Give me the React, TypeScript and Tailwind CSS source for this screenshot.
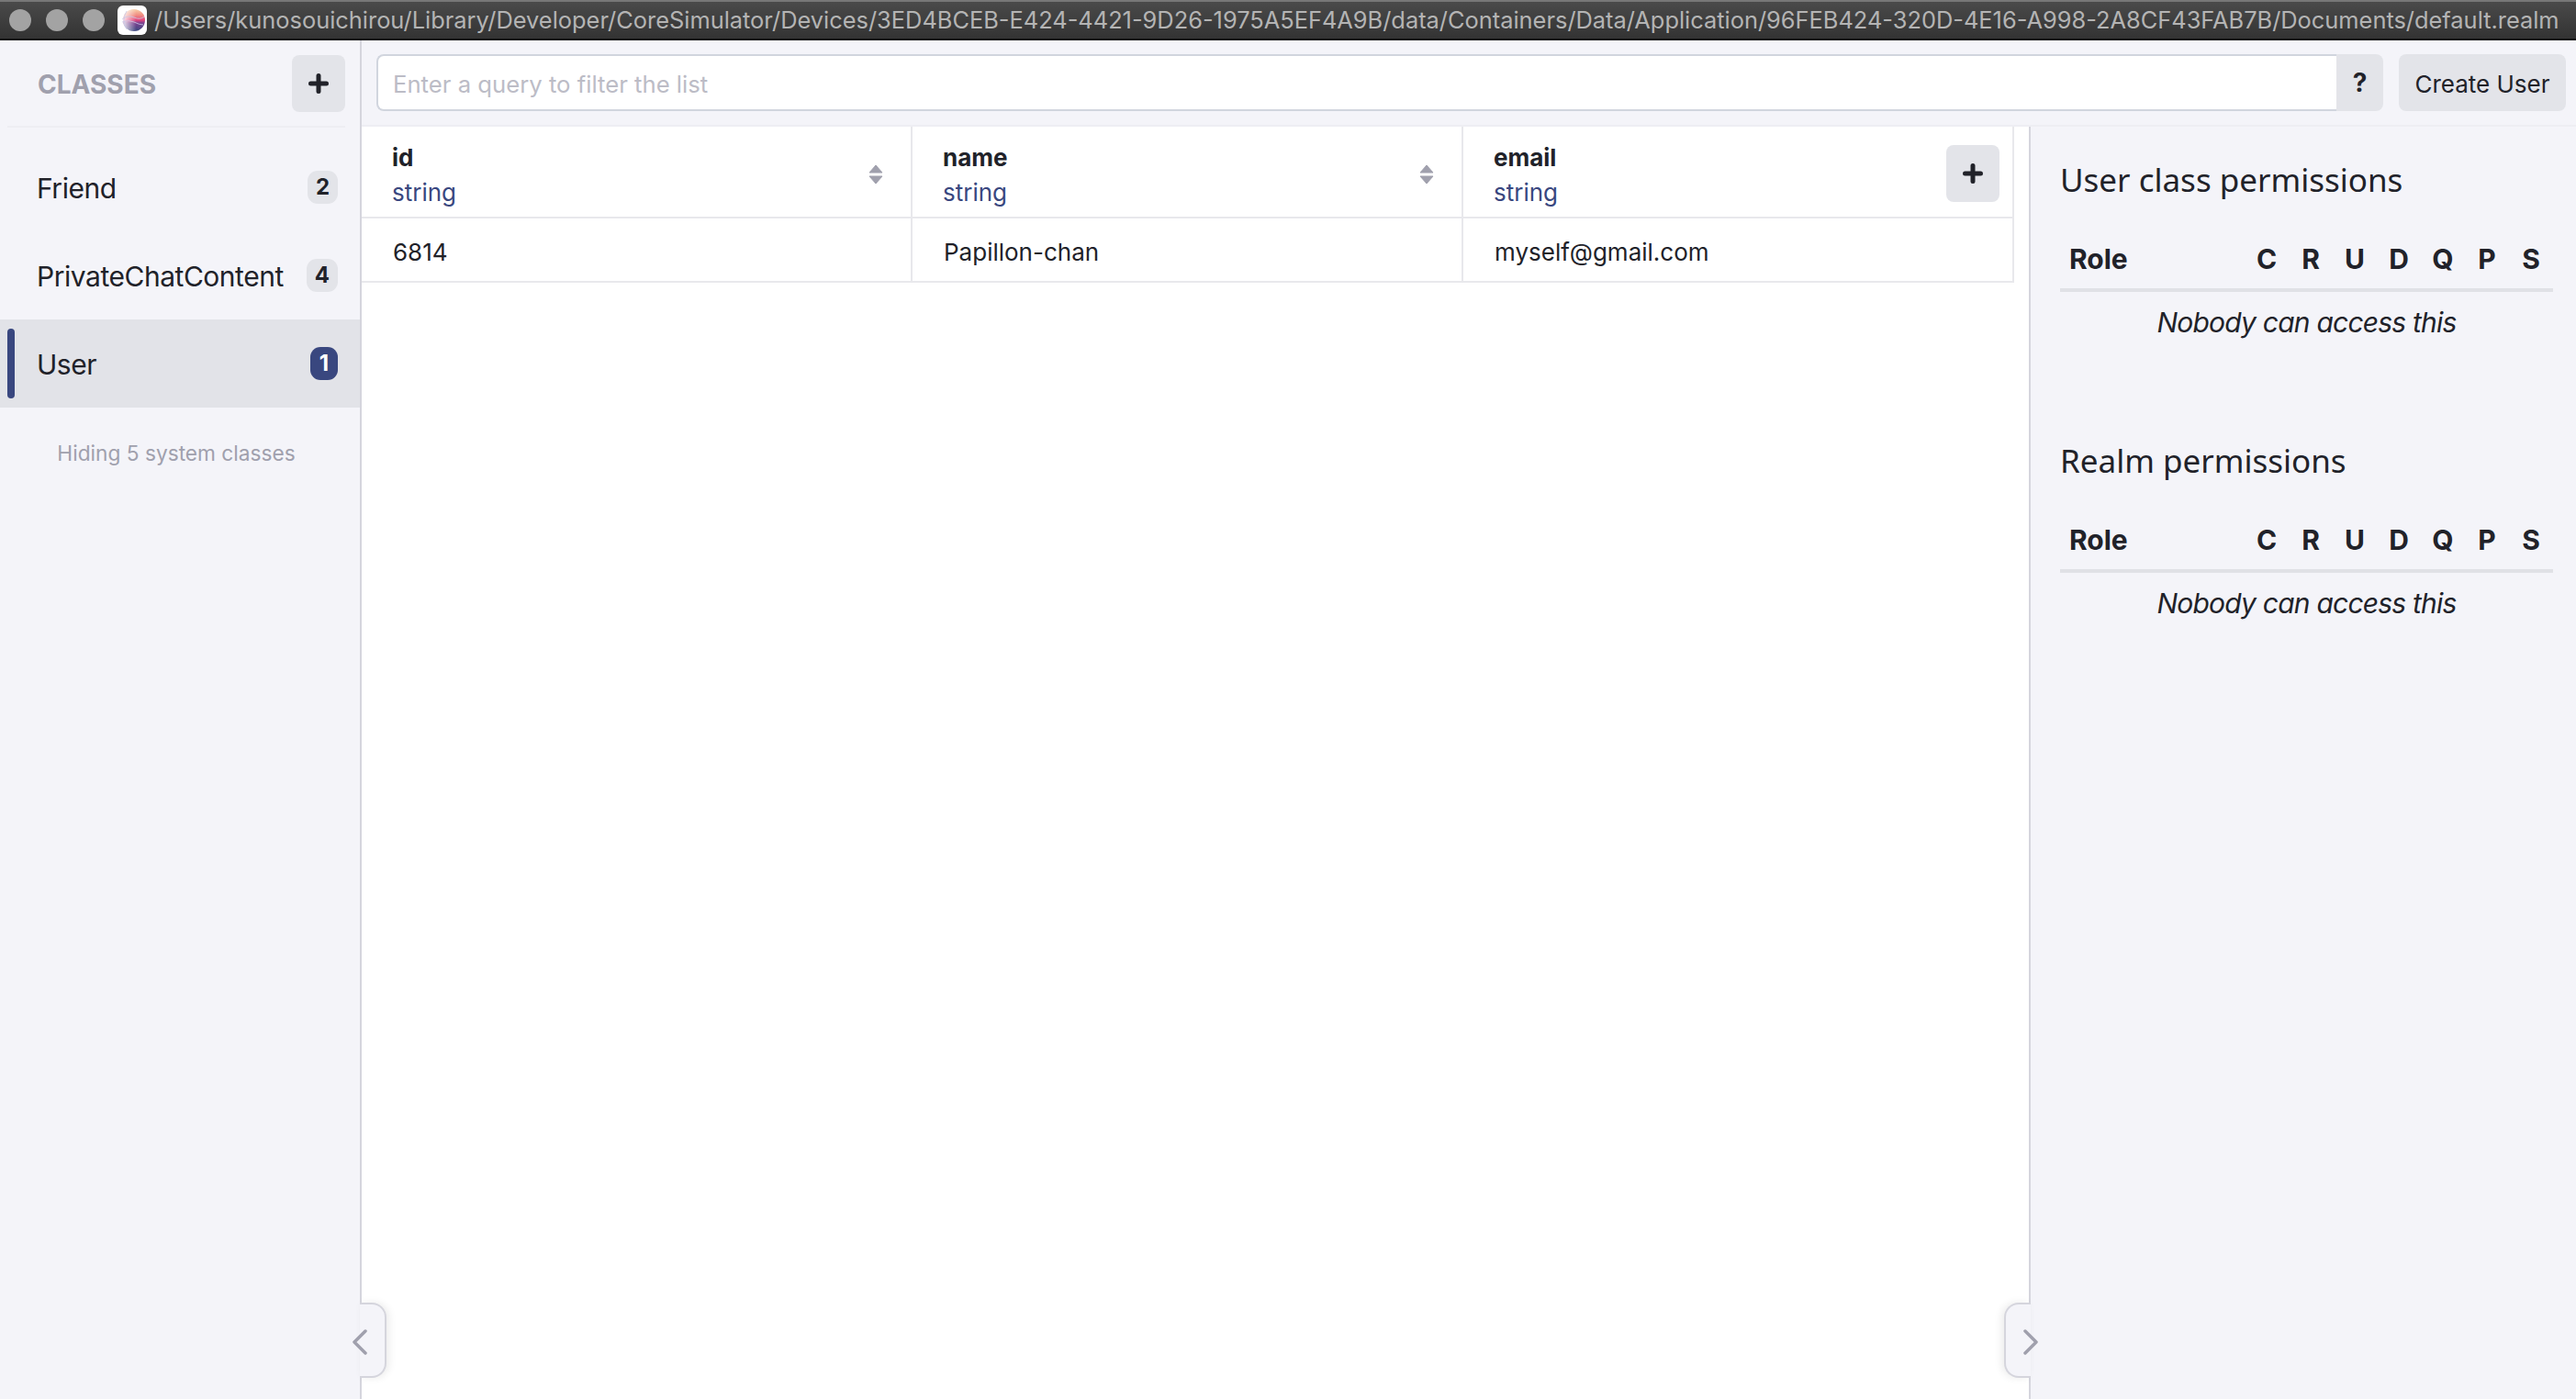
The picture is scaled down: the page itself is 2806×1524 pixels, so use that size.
const ink = "text-[#212229]";

function Plus({ size = 22 }: { size?: number }) {
  return (
    <svg width={size} height={size} viewBox="0 0 22 22">
      <path d="M11 2.5V19.5M2.5 11H19.5" stroke="#212229" strokeWidth="5" strokeLinecap="round" />
    </svg>
  );
}

function Logo() {
  return (
    <div className="w-[32px] h-[32px] bg-white rounded-[6px] flex items-center justify-center shrink-0">
      <svg width="28" height="28" viewBox="0 0 28 28">
        <defs>
          <linearGradient id="ball" x1="0" y1="0" x2="0" y2="1">
            <stop offset="0" stopColor="#f7cfa8" />
            <stop offset="0.28" stopColor="#f08a80" />
            <stop offset="0.5" stopColor="#e2447e" />
            <stop offset="0.62" stopColor="#7c4290" />
            <stop offset="1" stopColor="#39477f" />
          </linearGradient>
          <linearGradient id="fade" x1="0" y1="0" x2="1" y2="0">
            <stop offset="0" stopColor="#ffffff" stopOpacity="0.85" />
            <stop offset="0.6" stopColor="#ffffff" stopOpacity="0" />
          </linearGradient>
        </defs>
        <circle cx="16" cy="14" r="12" fill="url(#ball)" />
        <circle cx="16" cy="14" r="12" fill="url(#fade)" />
        <path d="M3 13Q9 8 16 11T27 10M3 16Q10 13 16 16T26 19M8 24Q2 14 8 4" fill="none" stroke="#c9c9e6" strokeWidth="0.8" />
      </svg>
    </div>
  );
}

function TitleBar() {
  return (
    <div className="h-[44px] shrink-0 flex items-center bg-gradient-to-b from-[#4a4a4a] to-[#333333] border-t-2 border-t-[#777777] border-b-2 border-b-[#0c0c0c] pl-[10px] overflow-hidden">
      <span className="w-[24px] h-[24px] rounded-full bg-[#a3a3a3] shrink-0" />
      <span className="w-[24px] h-[24px] rounded-full bg-[#a3a3a3] ml-[16px] shrink-0" />
      <span className="w-[24px] h-[24px] rounded-full bg-[#a3a3a3] ml-[16px] shrink-0" />
      <div className="ml-[14px]"><Logo /></div>
      <span className="ml-[8px] text-[25.4px] text-[#b4b4b4] whitespace-nowrap font-['Inter',sans-serif]">
        /Users/kunosouichirou/Library/Developer/CoreSimulator/Devices/3ED4BCEB-E424-4421-9D26-1975A5EF4A9B/data/Containers/Data/Application/96FEB424-320D-4E16-A998-2A8CF43FAB7B/Documents/default.realm
      </span>
    </div>
  );
}

function ClassRow({ name, count, active }: { name: string; count: number; active?: boolean }) {
  return (
    <div className={`h-[96px] flex items-center pl-[40px] pr-[24px] relative ${active ? "bg-[#e2e3e8]" : ""}`}>
      {active && <span className="absolute left-[8px] top-[10px] bottom-[10px] w-[8px] rounded-full bg-[#39477f]" />}
      <span className={`text-[30px] tracking-[-0.47px] pt-[2px] ${ink} flex-1`}>{name}</span>
      <span
        className={`h-[36px] min-w-[30px] px-[9px] rounded-[11px] flex items-center justify-center text-[24px] font-bold ${
          active ? "bg-[#39477f] text-white" : `bg-[#e3e4e9] ${ink}`
        }`}
      >
        {count}
      </span>
    </div>
  );
}

function Sidebar() {
  return (
    <aside className="w-[394px] shrink-0 bg-[#f4f4f9] border-r-2 border-r-[#d5d5dd] flex flex-col">
      <div className="h-[95px] ml-[8px] mr-[16px] pl-[33px] flex items-center justify-between border-b-2 border-b-[#eeeef3]">
        <span className="text-[28px] pt-[2px] font-bold text-[#a0a0ad]">CLASSES</span>
        <button className="w-[58px] h-[62px] rounded-[8px] bg-[#e3e4e9] flex items-center justify-center">
          <Plus />
        </button>
      </div>
      <div className="pt-[17px]">
        <ClassRow name="Friend" count={2} />
        <ClassRow name="PrivateChatContent" count={4} />
        <ClassRow name="User" count={1} active />
      </div>
      <div className="pt-[33px] pr-[8px] text-center text-[22.7px] text-[#a0a0ad]">Hiding 5 system classes</div>
    </aside>
  );
}

function Sort() {
  return (
    <svg width="16" height="22" viewBox="0 0 16 22" className="shrink-0">
      <path d="M8 1L15 9H1Z M1 13H15L8 21Z" fill="#a0a0ad" stroke="#a0a0ad" strokeWidth="1" strokeLinejoin="round" />
    </svg>
  );
}

function Column({ name, children }: { name: string; children: React.ReactNode }) {
  return (
    <div className="border-r-2 border-r-[#e8e8ec] last:border-r-0 h-full pl-[33px] pr-[14px] flex items-center justify-between">
      <div className="mt-[7px]">
        <div className={`text-[26px] leading-[38px] font-bold ${ink}`}>{name}</div>
        <div className="text-[26px] leading-[38px] text-[#39477f]">string</div>
      </div>
      {children}
    </div>
  );
}

const colClass = "grid grid-cols-[600px_600px_598px]";

function DataTable() {
  return (
    <div className="flex-1 bg-white relative">
      <div className="w-[1800px] border-r-2 border-r-[#e8e8ec]">
        <div className={`${colClass} h-[100px] border-b-2 border-b-[#e8e8ec]`}>
          <Column name="id"><div className="pr-[16px] mt-[5px]"><Sort /></div></Column>
          <Column name="name"><div className="pr-[16px] mt-[5px]"><Sort /></div></Column>
          <Column name="email">
            <button className="w-[58px] h-[62px] mt-[4px] rounded-[8px] bg-[#e3e4e9] flex items-center justify-center">
              <Plus />
            </button>
          </Column>
        </div>
        <div className={`${colClass} h-[70px] border-b-2 border-b-[#e8e8ec] text-[26px] ${ink}`}>
          <div className="border-r-2 border-r-[#e8e8ec] pl-[34px] pt-[4px] flex items-center">6814</div>
          <div className="border-r-2 border-r-[#e8e8ec] pl-[34px] pt-[4px] flex items-center">Papillon-chan</div>
          <div className="pl-[34px] pt-[4px] flex items-center">myself@gmail.com</div>
        </div>
      </div>
    </div>
  );
}

function Permissions({ title }: { title: string }) {
  return (
    <section className="h-[306px]">
      <h2 className={`text-[35px] leading-[46px] font-['Noto_Sans',sans-serif] ${ink}`}>{title}</h2>
      <div className={`mt-[35px] h-[64px] pb-[3px] border-b-4 border-b-[#e0e1e6] flex items-center pl-[10px] text-[30px] font-bold ${ink}`}>
        <span className="flex-1">Role</span>
        {["C", "R", "U", "D", "Q", "P", "S"].map((l) => (
          <span key={l} className="w-[48px] text-center">{l}</span>
        ))}
      </div>
      <p className={`mt-[11px] text-center text-[30px] tracking-[-0.78px] italic ${ink}`}>Nobody can access this</p>
    </section>
  );
}

function RightPanel() {
  return (
    <aside className="w-[596px] shrink-0 bg-[#f4f4f9] border-l-2 border-l-[#d5d5dd] pl-[32px] pr-[25px] pt-[35px]">
      <Permissions title="User class permissions" />
      <Permissions title="Realm permissions" />
    </aside>
  );
}

function Chevron({ right }: { right?: boolean }) {
  return (
    <svg width="16" height="28" viewBox="0 0 16 28">
      <path d={right ? "M2 2L14 14L2 26" : "M14 2L2 14L14 26"} fill="none" stroke="#a0a0ad" strokeWidth="3.5" strokeLinecap="round" strokeLinejoin="round" />
    </svg>
  );
}

export default function App() {
  return (
    <div className="w-[2806px] h-[1524px] flex flex-col overflow-hidden relative bg-[#f4f4f9] font-['Inter',sans-serif]">
      <TitleBar />
      <div className="flex-1 flex min-h-0">
        <Sidebar />
        <div className="flex-1 flex flex-col min-w-0">
          <div className="h-[94px] shrink-0 flex items-center pl-[16px] pr-[11px] border-b-2 border-b-[#eeeef3]">
            <input
              placeholder="Enter a query to filter the list"
              className="h-[62px] flex-1 min-w-0 bg-white border-2 border-[#d1d5de] border-r-0 rounded-l-[8px] px-[16px] pt-[2px] text-[25.7px] placeholder:text-[#bcbcc6] outline-none"
            />
            <button className={`h-[62px] w-[51px] rounded-r-[8px] bg-[#e3e4e9] text-[28px] font-bold ${ink}`}>?</button>
            <button className={`ml-[17px] h-[62px] w-[182px] pt-[2px] rounded-[8px] bg-[#e3e4e9] text-[26px] ${ink}`}>Create User</button>
          </div>
          <div className="flex-1 flex min-h-0">
            <DataTable />
            <RightPanel />
          </div>
        </div>
      </div>
      <div className="absolute left-[392px] top-[1419px] w-[29px] h-[82px] bg-[#f4f4f9] border-2 border-l-0 border-[#d5d5dd] rounded-r-[16px] shadow-[3px_0_8px_rgba(0,0,0,0.08)]" />
      <div className="absolute left-[384px] top-[1448px]"><Chevron /></div>
      <div className="absolute left-[2183px] top-[1419px] w-[29px] h-[82px] bg-[#f4f4f9] border-2 border-r-0 border-[#d5d5dd] rounded-l-[16px] shadow-[-3px_0_8px_rgba(0,0,0,0.08)]" />
      <div className="absolute left-[2204px] top-[1448px]"><Chevron right /></div>
    </div>
  );
}
